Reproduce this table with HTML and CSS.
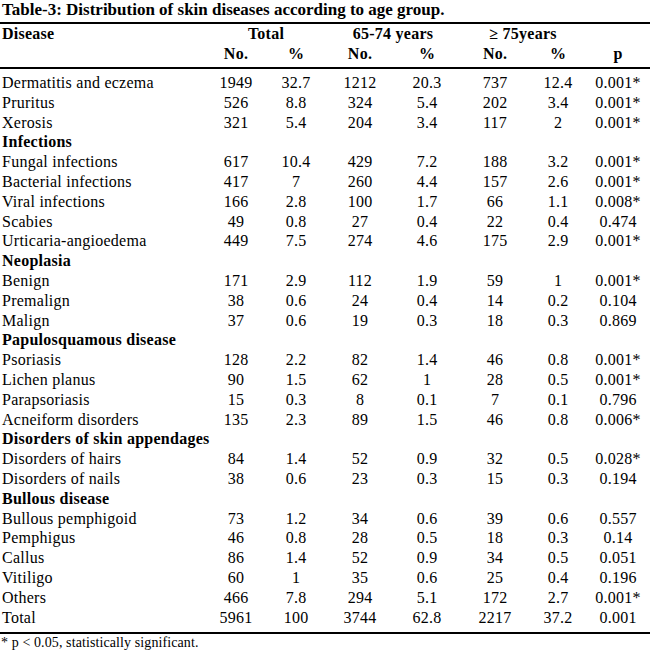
FILE: index.html
```html
<!DOCTYPE html>
<html lang="en">
<head>
<meta charset="utf-8">
<title>Table-3</title>
<link rel="stylesheet" href="styles.css">
</head>
<body>
<h1 class="title">Table-3: Distribution of skin diseases according to age group.</h1>
<table class="tbl">
<colgroup>
<col class="c-dis"><col class="c-n1"><col class="c-p1"><col class="c-n2"><col class="c-p2"><col class="c-n3"><col class="c-p3"><col class="c-pv">
</colgroup>
<thead>
<tr class="hr1"><th class="dis">Disease</th><th colspan="2">Total</th><th colspan="2">65-74 years</th><th colspan="2">≥ 75years</th><th></th></tr>
<tr class="hr2"><th></th><th>No.</th><th>%</th><th>No.</th><th>%</th><th>No.</th><th>%</th><th>p</th></tr>
</thead>
<tbody>
<tr class="first"><td>Dermatitis and eczema</td><td>1949</td><td>32.7</td><td>1212</td><td>20.3</td><td>737</td><td>12.4</td><td>0.001*</td></tr>
<tr><td>Pruritus</td><td>526</td><td>8.8</td><td>324</td><td>5.4</td><td>202</td><td>3.4</td><td>0.001*</td></tr>
<tr><td>Xerosis</td><td>321</td><td>5.4</td><td>204</td><td>3.4</td><td>117</td><td>2</td><td>0.001*</td></tr>
<tr class="cat"><td colspan="8">Infections</td></tr>
<tr><td>Fungal infections</td><td>617</td><td>10.4</td><td>429</td><td>7.2</td><td>188</td><td>3.2</td><td>0.001*</td></tr>
<tr><td>Bacterial infections</td><td>417</td><td>7</td><td>260</td><td>4.4</td><td>157</td><td>2.6</td><td>0.001*</td></tr>
<tr><td>Viral infections</td><td>166</td><td>2.8</td><td>100</td><td>1.7</td><td>66</td><td>1.1</td><td>0.008*</td></tr>
<tr><td>Scabies</td><td>49</td><td>0.8</td><td>27</td><td>0.4</td><td>22</td><td>0.4</td><td>0.474</td></tr>
<tr><td>Urticaria-angioedema</td><td>449</td><td>7.5</td><td>274</td><td>4.6</td><td>175</td><td>2.9</td><td>0.001*</td></tr>
<tr class="cat"><td colspan="8">Neoplasia</td></tr>
<tr><td>Benign</td><td>171</td><td>2.9</td><td>112</td><td>1.9</td><td>59</td><td>1</td><td>0.001*</td></tr>
<tr><td>Premalign</td><td>38</td><td>0.6</td><td>24</td><td>0.4</td><td>14</td><td>0.2</td><td>0.104</td></tr>
<tr><td>Malign</td><td>37</td><td>0.6</td><td>19</td><td>0.3</td><td>18</td><td>0.3</td><td>0.869</td></tr>
<tr class="cat"><td colspan="8">Papulosquamous disease</td></tr>
<tr><td>Psoriasis</td><td>128</td><td>2.2</td><td>82</td><td>1.4</td><td>46</td><td>0.8</td><td>0.001*</td></tr>
<tr><td>Lichen planus</td><td>90</td><td>1.5</td><td>62</td><td>1</td><td>28</td><td>0.5</td><td>0.001*</td></tr>
<tr><td>Parapsoriasis</td><td>15</td><td>0.3</td><td>8</td><td>0.1</td><td>7</td><td>0.1</td><td>0.796</td></tr>
<tr><td>Acneiform disorders</td><td>135</td><td>2.3</td><td>89</td><td>1.5</td><td>46</td><td>0.8</td><td>0.006*</td></tr>
<tr class="cat"><td colspan="8">Disorders of skin appendages</td></tr>
<tr><td>Disorders of hairs</td><td>84</td><td>1.4</td><td>52</td><td>0.9</td><td>32</td><td>0.5</td><td>0.028*</td></tr>
<tr><td>Disorders of nails</td><td>38</td><td>0.6</td><td>23</td><td>0.3</td><td>15</td><td>0.3</td><td>0.194</td></tr>
<tr class="cat"><td colspan="8">Bullous disease</td></tr>
<tr><td>Bullous pemphigoid</td><td>73</td><td>1.2</td><td>34</td><td>0.6</td><td>39</td><td>0.6</td><td>0.557</td></tr>
<tr><td>Pemphigus</td><td>46</td><td>0.8</td><td>28</td><td>0.5</td><td>18</td><td>0.3</td><td>0.14</td></tr>
<tr><td>Callus</td><td>86</td><td>1.4</td><td>52</td><td>0.9</td><td>34</td><td>0.5</td><td>0.051</td></tr>
<tr><td>Vitiligo</td><td>60</td><td>1</td><td>35</td><td>0.6</td><td>25</td><td>0.4</td><td>0.196</td></tr>
<tr><td>Others</td><td>466</td><td>7.8</td><td>294</td><td>5.1</td><td>172</td><td>2.7</td><td>0.001*</td></tr>
<tr class="last"><td>Total</td><td>5961</td><td>100</td><td>3744</td><td>62.8</td><td>2217</td><td>37.2</td><td>0.001</td></tr>
</tbody>
</table>
<p class="note">* p &lt; 0.05, statistically significant.</p>
</body>
</html>
```
FILE: styles.css
```css
html, body {
  margin: 0;
  padding: 0;
  background: #ffffff;
  color: #000000;
  font-family: "Liberation Serif", "Times New Roman", serif;
}

.title {
  margin: 0 0 2px 0;
  padding-left: 2px;
  font-size: 17px;
  line-height: 20px;
  font-weight: bold;
}

.tbl {
  width: 650px;
  border-collapse: collapse;
  table-layout: fixed;
  font-size: 16px;
  letter-spacing: 0.25px;
  border-top: 2px solid #000;
  border-bottom: 2px solid #000;
}

.c-dis { width: 206px; }
.c-n1 { width: 60px; }
.c-p1 { width: 60px; }
.c-n2 { width: 68px; }
.c-p2 { width: 66px; }
.c-n3 { width: 70px; }
.c-p3 { width: 56px; }
.c-pv { width: 64px; }

.tbl th,
.tbl td {
  padding: 0;
  line-height: 19.8px;
  text-align: center;
  white-space: nowrap;
  vertical-align: top;
}

.tbl th {
  font-weight: bold;
  line-height: 20px;
}

.tbl th:first-child,
.tbl td:first-child {
  text-align: left;
  padding-left: 2px;
}

.hr2 th {
  padding-bottom: 3px;
}

.tbl thead {
  border-bottom: 2px solid #000;
}

.tbl tr.first td {
  padding-top: 4px;
}

.tbl tr.last td {
  padding-bottom: 5px;
}

.tbl tr.cat td {
  font-weight: bold;
}

.note {
  margin: 0;
  padding-left: 1px;
  font-size: 14px;
  letter-spacing: 0.1px;
  line-height: 17px;
}
```
